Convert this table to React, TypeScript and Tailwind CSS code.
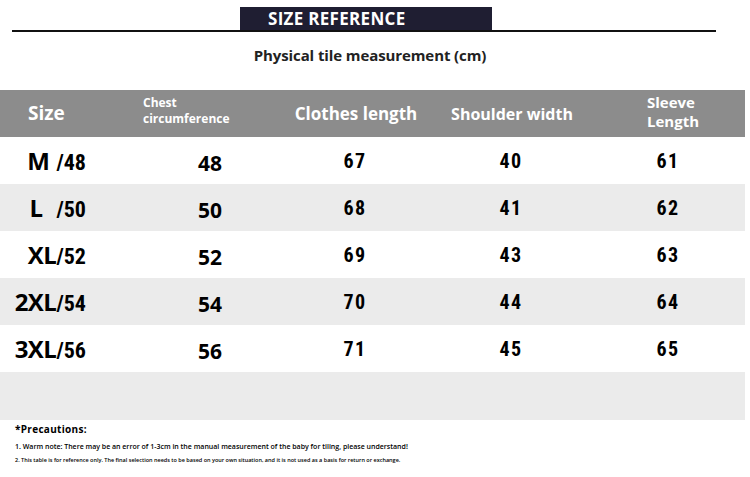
import React from "react";

const rows = [
  { size: "M", sizeGap: "ml-[7px]", num: "48", chest: "48", len: "67", sh: "40", sl: "61" },
  { size: "L", sizeGap: "ml-[14px]", num: "50", chest: "50", len: "68", sh: "41", sl: "62" },
  { size: "XL", sizeGap: "", num: "52", chest: "52", len: "69", sh: "43", sl: "63" },
  { size: "2XL", sizeGap: "", num: "54", chest: "54", len: "70", sh: "44", sl: "64" },
  { size: "3XL", sizeGap: "", num: "56", chest: "56", len: "71", sh: "45", sl: "65" },
];

const narrow = "font-['Liberation_Sans_Narrow','Roboto_Condensed','Roboto',sans-serif]";
const head = "font-['Open_Sans','Liberation_Sans',sans-serif]";

export default function App() {
  return (
    <div className={`w-[750px] h-[477px] bg-white overflow-hidden text-black ${head}`}>
      {/* title */}
      <div className="pt-[7px]">
        <div className="ml-[12px] w-[704px] border-b-[2px] border-[#111]">
          <div className="ml-[228px] w-[252px] h-[23px] bg-[#1f1e32] flex items-center pl-[28px]">
            <span className="text-white font-bold text-[17px] tracking-[0.3px] leading-none">SIZE REFERENCE</span>
          </div>
        </div>
      </div>

      <div className="mt-[13px] text-center text-[15px] font-bold tracking-[-0.1px] text-[#222] pr-[10px] leading-[20px]">
        Physical tile measurement (cm)
      </div>

      {/* table */}
      <div className="mt-[25px] w-[745px]">
        <div className="grid grid-cols-[140px_140px_150px_160px_155px] h-[47px] bg-[#8c8c8c] text-white font-bold items-center">
          <div className="pl-[28px] text-[19px]">Size</div>
          <div className="pl-[3px] text-[12px] leading-[16px] pb-[5px]">
            <div>Chest</div>
            <div>circumference</div>
          </div>
          <div className="text-center text-[17px] pl-[2px]">Clothes length</div>
          <div className="text-center text-[16px] pl-[4px]">Shoulder width</div>
          <div className="pl-[57px] text-[15px] leading-[19px] pb-[3px]">
            <div>Sleeve</div>
            <div>Length</div>
          </div>
        </div>

        {rows.map((r, i) => (
          <div
            key={r.size}
            className={`grid grid-cols-[140px_140px_150px_160px_155px] h-[47px] items-center ${
              i % 2 === 1 ? "bg-[#ebebeb]" : "bg-white"
            }`}
          >
            <div className="flex justify-end items-baseline pr-[54px]">
              <span className="font-bold text-[24px] tracking-[-0.5px]">{r.size}</span>
              <span className={`${narrow} font-bold text-[22px] ${r.sizeGap}`}>/{r.num}</span>
            </div>
            <div className="text-center font-bold text-[21px] pt-[6px]">{r.chest}</div>
            <div className={`text-center ${narrow} font-bold text-[20px] tracking-[1.5px]`}>{r.len}</div>
            <div className={`text-center ${narrow} font-bold text-[20px] tracking-[1.5px] pl-[2px]`}>{r.sh}</div>
            <div className={`text-center ${narrow} font-bold text-[20px] tracking-[1.5px] pl-[1px]`}>{r.sl}</div>
          </div>
        ))}
        <div className="h-[48px] bg-[#ebebeb]" />
      </div>

      {/* notes */}
      <div className="pl-[15px] pt-[2px]">
        <div className="text-[10px] font-bold tracking-[0.3px]">*Precautions:</div>
        <div className="mt-[6px] text-[7px] font-semibold leading-none">
          1. Warm note: There may be an error of 1-3cm in the manual measurement of the baby for tiling, please understand!
        </div>
        <div className="mt-[8px] text-[5.5px] font-semibold leading-none">
          2. This table is for reference only. The final selection needs to be based on your own situation, and it is not used as a basis for return or exchange.
        </div>
      </div>
    </div>
  );
}
